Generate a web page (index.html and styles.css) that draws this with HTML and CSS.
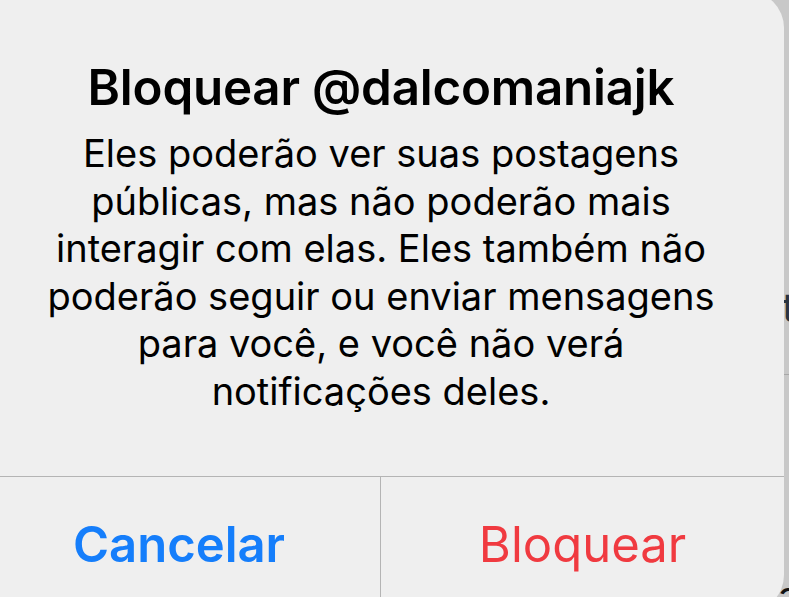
FILE: index.html
```html
<!DOCTYPE html>
<html lang="pt">
<head>
<meta charset="utf-8">
<link rel="stylesheet" href="styles.css">
</head>
<body>
<div class="backdrop">
  <span class="bg-glyph bg-glyph-t">t</span>
  <span class="bg-line"></span>
  <span class="bg-glyph bg-glyph-a">a</span>
</div>
<div class="alert">
  <div class="alert-content">
    <h1 class="alert-title">Bloquear @dalcomaniajk</h1>
    <p class="alert-message">Eles poderão ver suas postagens<br>públicas, mas não poderão mais<br>interagir com elas. Eles também não<br>poderão seguir ou enviar mensagens<br>para você, e você não verá<br>notificações deles.</p>
  </div>
  <div class="alert-actions">
    <button class="alert-btn btn-cancel">Cancelar</button>
    <button class="alert-btn btn-block">Bloquear</button>
  </div>
</div>
</body>
</html>
```
FILE: styles.css
```css
html, body {
  margin: 0;
  padding: 0;
}
body {
  width: 789px;
  height: 597px;
  overflow: hidden;
  background: #c8c8c8;
  font-family: Inter, "Noto Sans", "Liberation Sans", sans-serif;
  position: relative;
}
.backdrop {
  position: absolute;
  inset: 0;
}
.bg-glyph {
  position: absolute;
  color: #2a3440;
  font-size: 40px;
  line-height: 1;
}
.bg-glyph-t {
  left: 782px;
  top: 288px;
}
.bg-glyph-a {
  left: 778px;
  top: 576px;
  color: #111;
}
.bg-line {
  position: absolute;
  left: 784px;
  top: 374px;
  width: 5px;
  height: 1px;
  background: #a8a8a8;
}
.alert {
  position: relative;
  margin: -9px 0 0 -22px;
  width: 806px;
  height: 621px;
  background: #efefef;
  border-radius: 37px;
  display: flex;
  flex-direction: column;
  overflow: hidden;
}
.alert-content {
  flex: none;
  padding: 68px 10px 0;
  height: 485px;
  box-sizing: border-box;
  text-align: center;
  color: #000;
}
.alert-title {
  margin: 0;
  font-size: 49.3px;
  line-height: 56px;
  font-weight: 600;
  letter-spacing: -0.2px;
}
.alert-message {
  margin: 15px 0 0;
  font-size: 38px;
  line-height: 47.5px;
  font-weight: 400;
}
.alert-actions {
  flex: 1;
  display: grid;
  grid-template-columns: 403px 1fr;
  border-top: 1px solid #b4b4b4;
}
.alert-btn {
  border: 0;
  background: transparent;
  font-family: inherit;
  font-size: 49px;
  padding: 0;
  margin: 0;
}
.btn-cancel {
  color: #157efb;
  font-weight: 600;
  border-right: 1px solid #b4b4b4;
}
.btn-block {
  color: #f03a40;
  font-weight: 400;
}
```
